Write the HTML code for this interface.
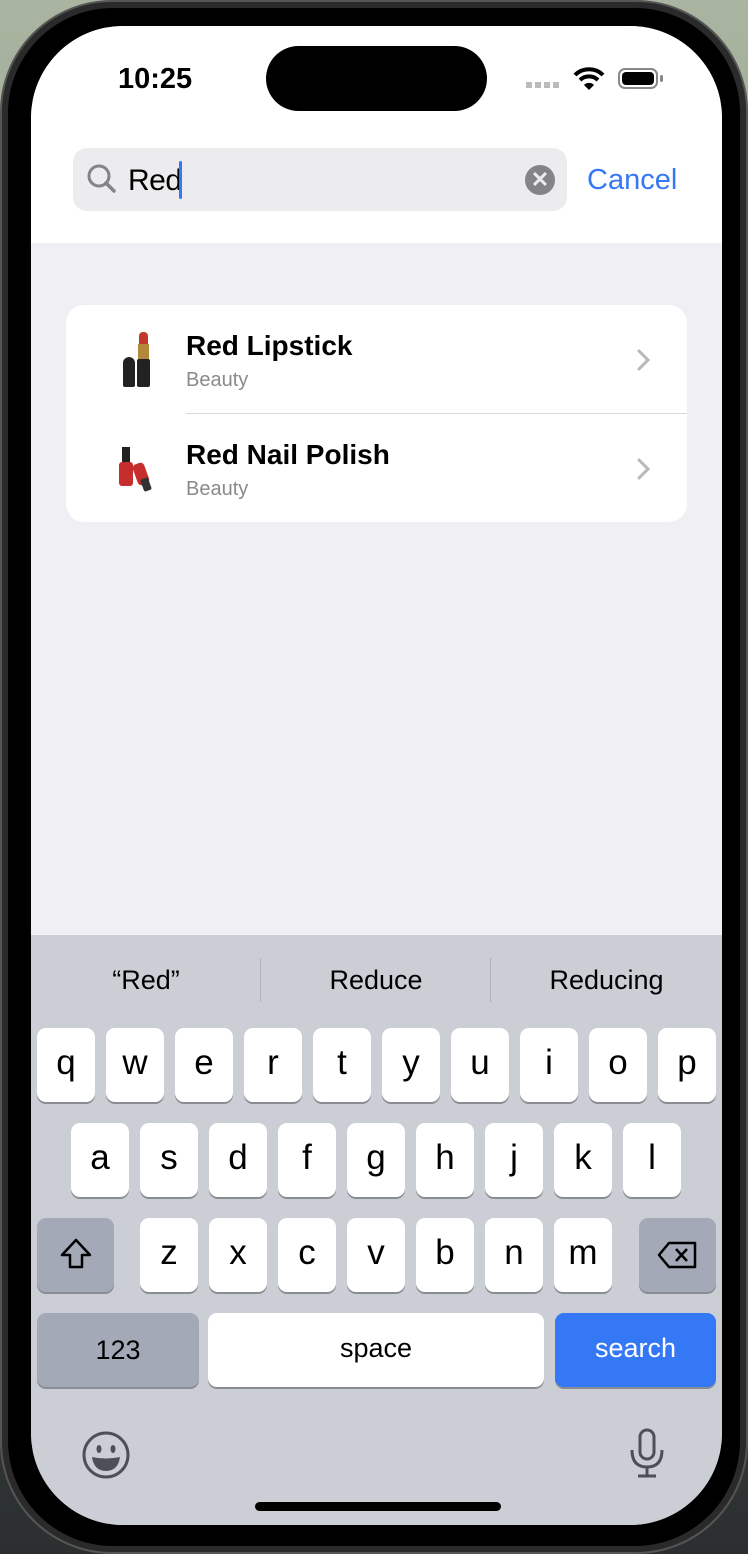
<!DOCTYPE html>
<html><head><meta charset="utf-8"><style>
*{margin:0;padding:0;box-sizing:border-box}
body{width:748px;height:1554px;background:#3a3f3f;position:relative;overflow:hidden;font-family:"Liberation Sans",sans-serif}
.bg{position:absolute;inset:0;background:linear-gradient(#a9b5a0 0,#8e9a88 40%,#3b4040 70%,#2b2f30 100%)}
.body{position:absolute;left:0;top:0;width:748px;height:1554px;border-radius:112px;background:#2a2a2a;border:2px solid #555}
.bezel{position:absolute;left:8px;top:8px;right:8px;bottom:8px;border-radius:105px;background:#000}
.screen{position:absolute;left:31px;top:26px;width:691px;height:1499px;border-radius:92px;overflow:hidden;background:#efeff4}
.abs{position:absolute}
.key{position:absolute;width:58px;height:74px;background:#fff;border-radius:9px;box-shadow:0 2px 0 #898c93;text-align:center;line-height:70px;font-size:35px;color:#000}
.dk{background:#a3a9b7}
</style></head><body>
<div class="bg"></div>
<div class="body"></div><div class="bezel"></div>
<div class="screen">
 <div class="abs" style="left:0;top:0;width:691px;height:217px;background:#fff"></div>
 <div class="abs" style="left:87px;top:37px;font-size:29px;font-weight:bold;color:#000">10:25</div>
 <div class="abs" style="left:235px;top:20px;width:221px;height:65px;border-radius:33px;background:#000"></div>
 <div class="abs" style="left:495px;top:56px;width:36px;height:6px;background:repeating-linear-gradient(90deg,#bbb 0 6px,transparent 6px 9px)"></div>
 <svg class="abs" style="left:541px;top:40px" width="34" height="26" viewBox="0 0 34 26"><path d="M3 9 A20 20 0 0 1 31 9" stroke="#000" stroke-width="4" fill="none"/><path d="M8 14 A13 13 0 0 1 26 14" stroke="#000" stroke-width="4" fill="none"/><path d="M12 19 L17 24 L22 19 A7 7 0 0 0 12 19Z" fill="#000"/></svg>
 <div class="abs" style="left:587px;top:42px;width:40px;height:21px;border:2px solid #888;border-radius:7px;padding:2px"><div style="width:100%;height:100%;background:#000;border-radius:4px"></div></div>
 <div class="abs" style="left:629px;top:49px;width:3px;height:7px;background:#888;border-radius:2px"></div>
 <div class="abs" style="left:42px;top:122px;width:494px;height:63px;border-radius:14px;background:#ececee"></div>
 <svg class="abs" style="left:55px;top:137px" width="32" height="32" viewBox="0 0 32 32"><circle cx="13" cy="13" r="10" stroke="#838388" stroke-width="3" fill="none"/><path d="M20 20 L28 28" stroke="#838388" stroke-width="3.5" stroke-linecap="round"/></svg>
 <div class="abs" style="left:97px;top:138px;font-size:30px;color:#000;letter-spacing:-0.5px">Red</div>
 <div class="abs" style="left:148px;top:135px;width:3px;height:38px;background:#3478f6;border-radius:2px"></div>
 <div class="abs" style="left:494px;top:139px;width:30px;height:30px;border-radius:50%;background:#838388;color:#ececee;text-align:center;line-height:29px;font-size:22px;font-weight:bold">✕</div>
 <div class="abs" style="left:556px;top:138px;font-size:29px;color:#3478f6">Cancel</div>
 <div class="abs" style="left:35px;top:279px;width:621px;height:217px;border-radius:18px;background:#fff"></div>
 <div class="abs" style="left:155px;top:387px;width:501px;height:1px;background:#d8d8dc"></div>
 <div class="abs" style="left:92px;top:331px;width:12px;height:30px;border-radius:6px 6px 2px 2px;background:#222"></div>
 <div class="abs" style="left:108px;top:306px;width:9px;height:14px;border-radius:4px 4px 0 0;background:#c0392b"></div>
 <div class="abs" style="left:107px;top:318px;width:11px;height:16px;background:#b08a3a"></div>
 <div class="abs" style="left:106px;top:333px;width:13px;height:28px;background:#222;border-radius:2px"></div>
 <div class="abs" style="left:91px;top:421px;width:8px;height:15px;background:#222"></div>
 <div class="abs" style="left:88px;top:436px;width:14px;height:24px;background:#c62e2e;border-radius:3px"></div>
 <div class="abs" style="left:104px;top:437px;width:12px;height:22px;background:#c62e2e;border-radius:4px;transform:rotate(-20deg)"></div>
 <div class="abs" style="left:111px;top:452px;width:8px;height:13px;background:#333;border-radius:2px;transform:rotate(-20deg)"></div>
 <div class="abs" style="left:155px;top:304px;font-size:28px;font-weight:bold;color:#000">Red Lipstick</div>
 <div class="abs" style="left:155px;top:343px;font-size:20px;color:#8a8a8e">Beauty</div>
 <div class="abs" style="left:155px;top:413px;font-size:28px;font-weight:bold;color:#000">Red Nail Polish</div>
 <div class="abs" style="left:155px;top:452px;font-size:20px;color:#8a8a8e">Beauty</div>
 <svg class="abs" style="left:605px;top:322px" width="16" height="24" viewBox="0 0 16 24"><path d="M3 3 L12 12 L3 21" stroke="#b8b8bd" stroke-width="3" fill="none" stroke-linecap="round"/></svg>
 <svg class="abs" style="left:605px;top:431px" width="16" height="24" viewBox="0 0 16 24"><path d="M3 3 L12 12 L3 21" stroke="#b8b8bd" stroke-width="3" fill="none" stroke-linecap="round"/></svg>
 <div class="abs" style="left:0;top:909px;width:691px;height:590px;background:#ccced6">
  <div class="abs" style="left:0;top:30px;width:230px;text-align:center;font-size:27px;color:#000">“Red”</div>
  <div class="abs" style="left:229px;top:23px;width:1px;height:44px;background:#aeb1b8"></div>
  <div class="abs" style="left:230px;top:30px;width:230px;text-align:center;font-size:27px;color:#000">Reduce</div>
  <div class="abs" style="left:459px;top:23px;width:1px;height:44px;background:#aeb1b8"></div>
  <div class="abs" style="left:460px;top:30px;width:231px;text-align:center;font-size:27px;color:#000">Reducing</div>
 </div>
 <div class="key" style="left:6px;top:1002px">q</div>
 <div class="key" style="left:75px;top:1002px">w</div>
 <div class="key" style="left:144px;top:1002px">e</div>
 <div class="key" style="left:213px;top:1002px">r</div>
 <div class="key" style="left:282px;top:1002px">t</div>
 <div class="key" style="left:351px;top:1002px">y</div>
 <div class="key" style="left:420px;top:1002px">u</div>
 <div class="key" style="left:489px;top:1002px">i</div>
 <div class="key" style="left:558px;top:1002px">o</div>
 <div class="key" style="left:627px;top:1002px">p</div>
 <div class="key" style="left:40px;top:1097px">a</div>
 <div class="key" style="left:109px;top:1097px">s</div>
 <div class="key" style="left:178px;top:1097px">d</div>
 <div class="key" style="left:247px;top:1097px">f</div>
 <div class="key" style="left:316px;top:1097px">g</div>
 <div class="key" style="left:385px;top:1097px">h</div>
 <div class="key" style="left:454px;top:1097px">j</div>
 <div class="key" style="left:523px;top:1097px">k</div>
 <div class="key" style="left:592px;top:1097px">l</div>
 <div class="key dk" style="left:6px;top:1192px;width:77px"><svg width="40" height="40" viewBox="0 0 40 40" style="margin-top:16px"><path d="M20 6 L34 21 L26 21 L26 33 L14 33 L14 21 L6 21 Z" stroke="#000" stroke-width="2.5" fill="none" stroke-linejoin="round"/></svg></div>
 <div class="key" style="left:109px;top:1192px">z</div>
 <div class="key" style="left:178px;top:1192px">x</div>
 <div class="key" style="left:247px;top:1192px">c</div>
 <div class="key" style="left:316px;top:1192px">v</div>
 <div class="key" style="left:385px;top:1192px">b</div>
 <div class="key" style="left:454px;top:1192px">n</div>
 <div class="key" style="left:523px;top:1192px">m</div>
 <div class="key dk" style="left:608px;top:1192px;width:77px"><svg width="42" height="30" viewBox="0 0 42 30" style="margin-top:22px"><path d="M12 3 L38 3 L38 27 L12 27 L2 15 Z" stroke="#000" stroke-width="2.5" fill="none" stroke-linejoin="round"/><path d="M19 9 L30 21 M30 9 L19 21" stroke="#000" stroke-width="2.5"/></svg></div>
 <div class="key dk" style="left:6px;top:1287px;width:162px;font-size:27px;line-height:74px">123</div>
 <div class="key" style="left:177px;top:1287px;width:336px;font-size:27px">space</div>
 <div class="key" style="left:524px;top:1287px;width:161px;font-size:27px;background:#3478f6;color:#fff">search</div>
 <svg class="abs" style="left:50px;top:1404px" width="50" height="50" viewBox="0 0 50 50"><circle cx="25" cy="25" r="22" stroke="#4d5057" stroke-width="3" fill="none"/><ellipse cx="18" cy="19" rx="2.5" ry="4" fill="#4d5057"/><ellipse cx="32" cy="19" rx="2.5" ry="4" fill="#4d5057"/><path d="M11 27 Q25 30 39 27 Q37 41 25 41 Q13 41 11 27Z" fill="#4d5057"/></svg>
 <svg class="abs" style="left:596px;top:1402px" width="40" height="52" viewBox="0 0 40 52"><rect x="13" y="2" width="14" height="29" rx="7" stroke="#4d5057" stroke-width="3" fill="none"/><path d="M5 22 Q5 39 20 39 Q35 39 35 22" stroke="#4d5057" stroke-width="3" fill="none"/><path d="M20 39 L20 48 M11 48 L29 48" stroke="#4d5057" stroke-width="3"/></svg>
 <div class="abs" style="left:224px;top:1476px;width:246px;height:9px;border-radius:5px;background:#000"></div>
</div>
</body></html>
